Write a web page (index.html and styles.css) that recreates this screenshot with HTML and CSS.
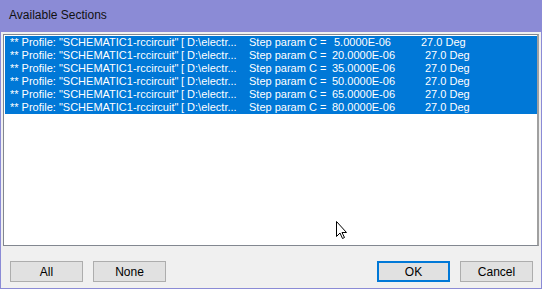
FILE: index.html
```html
<!DOCTYPE html>
<html lang="en">
<head>
    <meta charset="UTF-8">
    <title>Available Sections</title>
    <link rel="stylesheet" href="styles.css">
</head>
<body>
    <div class="dialog">
        <div class="title-bar">Available Sections</div>

        <div class="dialog-body">
            <div class="section-list">
                <div class="row first">
                    <span class="col-name">** Profile: "SCHEMATIC1-rccircuit"</span>
                    <span class="col-path">[ D:\electr...</span>
                    <span class="col-step">Step param C =</span>
                    <span class="col-value">5.0000E-06</span>
                    <span class="col-temp">27.0 Deg</span>
                </div>
                <div class="row">
                    <span class="col-name">** Profile: "SCHEMATIC1-rccircuit"</span>
                    <span class="col-path">[ D:\electr...</span>
                    <span class="col-step">Step param C =</span>
                    <span class="col-value">20.0000E-06</span>
                    <span class="col-temp">27.0 Deg</span>
                </div>
                <div class="row">
                    <span class="col-name">** Profile: "SCHEMATIC1-rccircuit"</span>
                    <span class="col-path">[ D:\electr...</span>
                    <span class="col-step">Step param C =</span>
                    <span class="col-value">35.0000E-06</span>
                    <span class="col-temp">27.0 Deg</span>
                </div>
                <div class="row">
                    <span class="col-name">** Profile: "SCHEMATIC1-rccircuit"</span>
                    <span class="col-path">[ D:\electr...</span>
                    <span class="col-step">Step param C =</span>
                    <span class="col-value">50.0000E-06</span>
                    <span class="col-temp">27.0 Deg</span>
                </div>
                <div class="row">
                    <span class="col-name">** Profile: "SCHEMATIC1-rccircuit"</span>
                    <span class="col-path">[ D:\electr...</span>
                    <span class="col-step">Step param C =</span>
                    <span class="col-value">65.0000E-06</span>
                    <span class="col-temp">27.0 Deg</span>
                </div>
                <div class="row">
                    <span class="col-name">** Profile: "SCHEMATIC1-rccircuit"</span>
                    <span class="col-path">[ D:\electr...</span>
                    <span class="col-step">Step param C =</span>
                    <span class="col-value">80.0000E-06</span>
                    <span class="col-temp">27.0 Deg</span>
                </div>

                <!-- mouse pointer -->
                <svg class="cursor" width="13" height="20" viewBox="0 0 13 20">
                    <path d="M0.5 0.5 L0.5 15.5 L4 12 L6.5 17.5 L8.5 16.5 L6 11.5 L10.5 11.5 Z"
                          fill="#fff" stroke="#000" stroke-width="1" stroke-linejoin="miter"/>
                </svg>
            </div>
        </div>

        <div class="button-bar">
            <div class="button-group">
                <button class="btn">All</button>
                <button class="btn">None</button>
            </div>
            <div class="button-group">
                <button class="btn btn-default">OK</button>
                <button class="btn">Cancel</button>
            </div>
        </div>
    </div>
</body>
</html>
```

FILE: styles.css
```css
* {
    margin: 0;
    padding: 0;
    box-sizing: border-box;
}

:root {
    --frame: #8b8bd6;
    --face: #f0f0f0;
    --select: #0078d7;
    --btn-face: #e1e1e1;
    --btn-border: #adadad;
}

body {
    font-family: 'Liberation Sans', Arial, sans-serif;
    background: var(--face);
}

/* window */
.dialog {
    width: 542px;
    height: 289px;
    display: flex;
    flex-direction: column;
    background: var(--face);
    border: 1px solid var(--frame);
    border-top: none;
}

.title-bar {
    height: 32px;
    background: var(--frame);
    margin: 0 -1px;
    padding: 8px 0 0 9px;
    font-size: 12px;
    color: #111;
}

.dialog-body {
    padding: 2px 2px 0 2px;
}

/* list box */
.section-list {
    position: relative;
    height: 212px;
    background: #fff;
    border: 1px solid #828790;
    border-right: 2px solid #a0a0a0;
    padding: 1px 0 0 1px;
}

.row {
    display: flex;
    height: 13px;
    line-height: 13px;
    padding-left: 5px;
    background: var(--select);
    color: #fff;
    font-size: 11px;
    white-space: nowrap;
}

.row span {
    overflow: hidden;
}

.col-name {
    width: 171px;
}

.col-path {
    width: 68px;
}

.col-step {
    width: 83px;
}

.col-value {
    width: 93px;
}

.row.first .col-value {
    padding-left: 2px;
    width: 89px;
}

.cursor {
    position: absolute;
    left: 332px;
    top: 186px;
}

/* buttons */
.button-bar {
    display: flex;
    justify-content: space-between;
    padding: 15px 8px 0 9px;
}

.button-group {
    display: flex;
    gap: 10px;
}

.btn {
    width: 73px;
    height: 21px;
    background: var(--btn-face);
    border: 1px solid var(--btn-border);
    font-family: 'Liberation Sans', Arial, sans-serif;
    font-size: 12px;
    color: #000;
}

.btn-default {
    border: 2px solid var(--select);
}
```
